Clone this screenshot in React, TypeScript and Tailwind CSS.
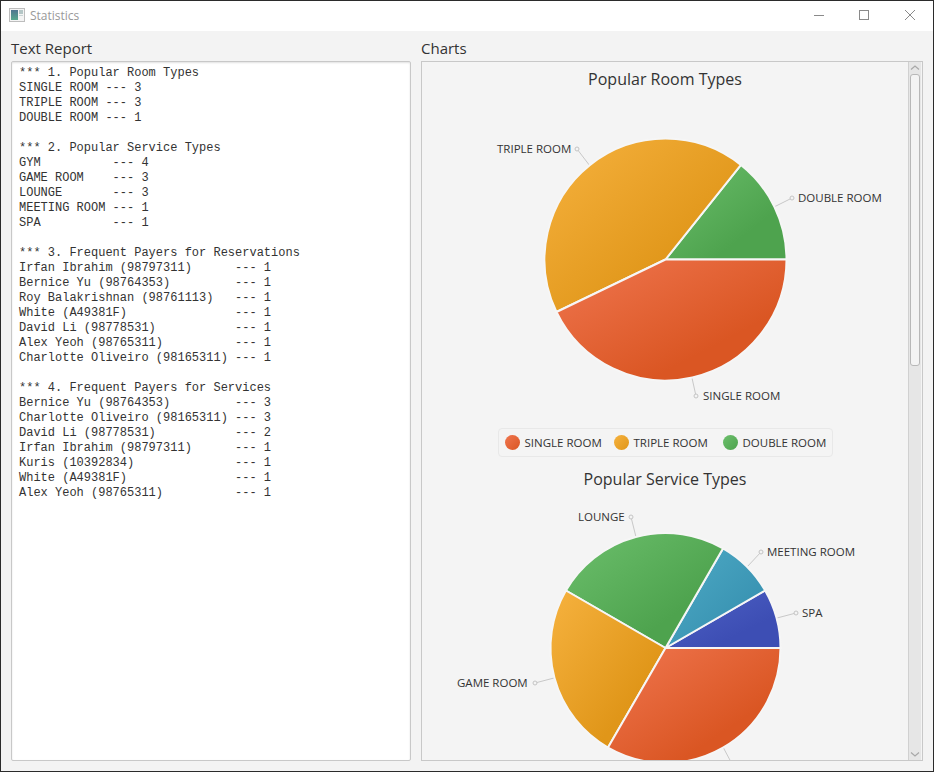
const ui = "font-['Open_Sans','Noto_Sans',sans-serif]";

const report = `*** 1. Popular Room Types
SINGLE ROOM --- 3
TRIPLE ROOM --- 3
DOUBLE ROOM --- 1

*** 2. Popular Service Types
GYM          --- 4
GAME ROOM    --- 3
LOUNGE       --- 3
MEETING ROOM --- 1
SPA          --- 1

*** 3. Frequent Payers for Reservations
Irfan Ibrahim (98797311)      --- 1
Bernice Yu (98764353)         --- 1
Roy Balakrishnan (98761113)   --- 1
White (A49381F)               --- 1
David Li (98778531)           --- 1
Alex Yeoh (98765311)          --- 1
Charlotte Oliveiro (98165311) --- 1

*** 4. Frequent Payers for Services
Bernice Yu (98764353)         --- 3
Charlotte Oliveiro (98165311) --- 3
David Li (98778531)           --- 2
Irfan Ibrahim (98797311)      --- 1
Kuris (10392834)              --- 1
White (A49381F)               --- 1
Alex Yeoh (98765311)          --- 1`;

const colors: Record<string, [string, string]> = {
  red: ["#f07650", "#da5623"],
  orange: ["#f6b23f", "#e09619"],
  green: ["#6cbf6c", "#4ea34e"],
  teal: ["#4fabc6", "#3a94b3"],
  blue: ["#4f62c6", "#3d4eb4"],
};

function wedge(cx: number, cy: number, r: number, a0: number, a1: number) {
  const p = (a: number) => {
    const t = (a * Math.PI) / 180;
    return `${(cx + r * Math.cos(t)).toFixed(2)} ${(cy - r * Math.sin(t)).toFixed(2)}`;
  };
  return `M${cx} ${cy}L${p(a0)}A${r} ${r} 0 ${a1 - a0 > 180 ? 1 : 0} 0 ${p(a1)}Z`;
}

function Gradients() {
  return (
    <defs>
      {Object.entries(colors).map(([k, [a, b]]) => (
        <linearGradient key={k} id={`g-${k}`} x1="0" y1="0" x2="1" y2="1">
          <stop offset="0" stopColor={a} />
          <stop offset="0.7" stopColor={b} />
          <stop offset="1" stopColor={b} />
        </linearGradient>
      ))}
    </defs>
  );
}

type Label = { t?: string; x?: number; y?: number; dot?: [number, number]; from: [number, number]; end: [number, number] };

function Pie({
  top, height, cx, cy, r, slices, labels,
}: {
  top: number; height: number; cx: number; cy: number; r: number;
  slices: [number, number, string][]; labels: Label[];
}) {
  // the drawing's coordinates are the page's, shifted to the chart's own corner
  const x0 = 422;
  return (
    <svg width="487" height={height} className="block shrink-0">
      <Gradients />
      {labels.map((l, i) => (
        <g key={i}>
          <line x1={l.from[0] - x0} y1={l.from[1] - top} x2={l.end[0] - x0} y2={l.end[1] - top} stroke="#c8c8c8" strokeWidth="1" />
          {l.dot && <circle cx={l.dot[0] - x0} cy={l.dot[1] - top} r="2" fill="#f4f4f4" stroke="#c4c4c4" strokeWidth="1" />}
          {l.t && (
            <text x={(l.x ?? 0) - x0} y={(l.y ?? 0) - top - 1} dominantBaseline="central" fontSize="11.5" fill="#333" fontFamily="'Open Sans'">{l.t}</text>
          )}
        </g>
      ))}
      {slices.map(([a, b, c]) => (
        <path key={c + a} d={wedge(cx - x0, cy - top, r, a, b)} fill={`url(#g-${c})`} stroke="#f6f6f6" strokeWidth="2" strokeLinejoin="round" />
      ))}
    </svg>
  );
}

function LegendItem({ color, text }: { color: string; text: string }) {
  const [a, b] = colors[color];
  return (
    <div className="flex items-center gap-[5px]">
      <span className="w-[15px] h-[15px] rounded-full shrink-0" style={{ background: `linear-gradient(135deg, ${a}, ${b})` }} />
      <span className="text-[11.5px] text-[#333] leading-none whitespace-nowrap">{text}</span>
    </div>
  );
}

function ScrollBar() {
  return (
    <div className="w-[13px] border-l border-[#d0d0d0] bg-[#e6e6e6] flex flex-col items-center shrink-0">
      <svg width="12" height="12" viewBox="0 0 12 12" className="shrink-0">
        <path d="M2 7.5L6 4L10 7.5" fill="none" stroke="#a8a8a8" strokeWidth="1.2" />
      </svg>
      <div className="w-[10px] h-[292px] rounded-[3px] border border-[#b8b8b8] bg-[#f4f4f4] shrink-0" />
      <div className="flex-1" />
      <svg width="12" height="12" viewBox="0 0 12 12" className="shrink-0">
        <path d="M2 4.5L6 8L10 4.5" fill="none" stroke="#a8a8a8" strokeWidth="1.2" />
      </svg>
    </div>
  );
}

export default function App() {
  return (
    <div className={`w-[934px] h-[772px] border border-[#2b2b2b] bg-[#f3f3f3] flex flex-col overflow-hidden ${ui}`}>
      <div className="h-[30px] bg-white flex items-center pl-[8px] shrink-0">
        <svg width="16" height="14" viewBox="0 0 16 14" className="shrink-0 mb-[2px]">
          <defs>
            <linearGradient id="icon-left" x1="0" y1="0" x2="0" y2="1">
              <stop offset="0" stopColor="#4f7590" />
              <stop offset="1" stopColor="#58a88e" />
            </linearGradient>
          </defs>
          <rect x="0.5" y="0.5" width="15" height="13" fill="#f4f4f4" stroke="#bdbdbd" />
          <rect x="2" y="2" width="7" height="10" fill="url(#icon-left)" />
          <rect x="10" y="2" width="4" height="4" fill="#b4c6c6" />
          <rect x="10" y="7" width="4" height="1" fill="#c8d4d4" />
        </svg>
        <span className="ml-[5px] text-[12px] text-[#999]">Statistics</span>
        <div className="flex-1" />
        <div className="flex items-center mr-[1px] pb-[2px]">
          <div className="w-[42px] flex items-center justify-center">
            <svg width="10" height="10"><path d="M0 5.5H10" stroke="#8a8a8a" /></svg>
          </div>
          <div className="w-[48px] flex items-center justify-center">
            <svg width="10" height="10"><rect x="0.5" y="0.5" width="9" height="9" fill="none" stroke="#8a8a8a" /></svg>
          </div>
          <div className="w-[44px] flex items-center justify-center">
            <svg width="10" height="10"><path d="M0 0L10 10M10 0L0 10" stroke="#8a8a8a" /></svg>
          </div>
        </div>
      </div>
      <div className="flex-1 min-h-0 flex gap-[10px] px-[10px] pb-[10px]">
        <div className="w-[400px] flex flex-col">
          <div className="h-[30px] shrink-0 flex items-end pb-[2px] text-[15px] text-[#333]">Text Report</div>
          <div className="flex-1 min-h-0 bg-white border border-[#c8c8c8] rounded-[2px] shadow-[inset_0_1px_2px_rgba(0,0,0,0.12)] pt-[4px] px-[7px]">
            <pre className="font-['Liberation_Mono',monospace] text-[12px] leading-[15px] text-[#333] m-0">{report}</pre>
          </div>
        </div>
        <div className="w-[502px] flex flex-col">
          <div className="h-[30px] shrink-0 flex items-end pb-[2px] text-[15px] text-[#333]">Charts</div>
          <div className="flex-1 min-h-0 border border-[#c8c8c8] bg-[#f4f4f4] flex pr-[1px]">
            <div className="flex-1 min-w-0 overflow-hidden flex flex-col">
              <div className="h-[38px] pb-[4px] shrink-0 flex items-center justify-center text-[16px] text-[#333]">Popular Room Types</div>
              <Pie
                top={100}
                height={320}
                cx={665.5}
                cy={259.5}
                r={121}
                slices={[
                  [0, 51.43, "green"],
                  [51.43, 205.71, "orange"],
                  [205.71, 360, "red"],
                ]}
                labels={[
                  { t: "TRIPLE ROOM", x: 497, y: 149, dot: [577, 149], from: [577, 149], end: [590, 166] },
                  { t: "DOUBLE ROOM", x: 798, y: 198, dot: [792, 198], from: [792, 198], end: [774, 207] },
                  { t: "SINGLE ROOM", x: 703, y: 396, dot: [696, 396], from: [696, 396], end: [692, 378] },
                ]}
              />
              <div className="shrink-0 flex justify-center mt-[8px]">
                <div className="w-[335px] h-[29px] border border-[#e8e8e8] rounded-[4px] grid grid-cols-[109px_109px_1fr] items-center pl-[6px]">
                  <LegendItem color="red" text="SINGLE ROOM" />
                  <LegendItem color="orange" text="TRIPLE ROOM" />
                  <LegendItem color="green" text="DOUBLE ROOM" />
                </div>
              </div>
              <div className="h-[39px] pb-[1px] mt-[3px] shrink-0 flex items-center justify-center text-[16px] text-[#333]">Popular Service Types</div>
              <Pie
                top={499}
                height={262}
                cx={665.5}
                cy={648}
                r={115}
                slices={[
                  [0, 30, "blue"],
                  [30, 60, "teal"],
                  [60, 150, "green"],
                  [150, 240, "orange"],
                  [240, 360, "red"],
                ]}
                labels={[
                  { t: "LOUNGE", x: 578, y: 517, dot: [631, 517], from: [631, 517], end: [636, 537] },
                  { t: "MEETING ROOM", x: 767, y: 552, dot: [761, 552], from: [761, 552], end: [747, 567] },
                  { t: "SPA", x: 802, y: 613, dot: [796, 613], from: [796, 613], end: [777, 618] },
                  { t: "GAME ROOM", x: 457, y: 683, dot: [535, 683], from: [535, 683], end: [554, 678] },
                  { from: [731, 762], end: [723, 747] },
                ]}
              />
            </div>
            <ScrollBar />
          </div>
        </div>
      </div>
    </div>
  );
}
